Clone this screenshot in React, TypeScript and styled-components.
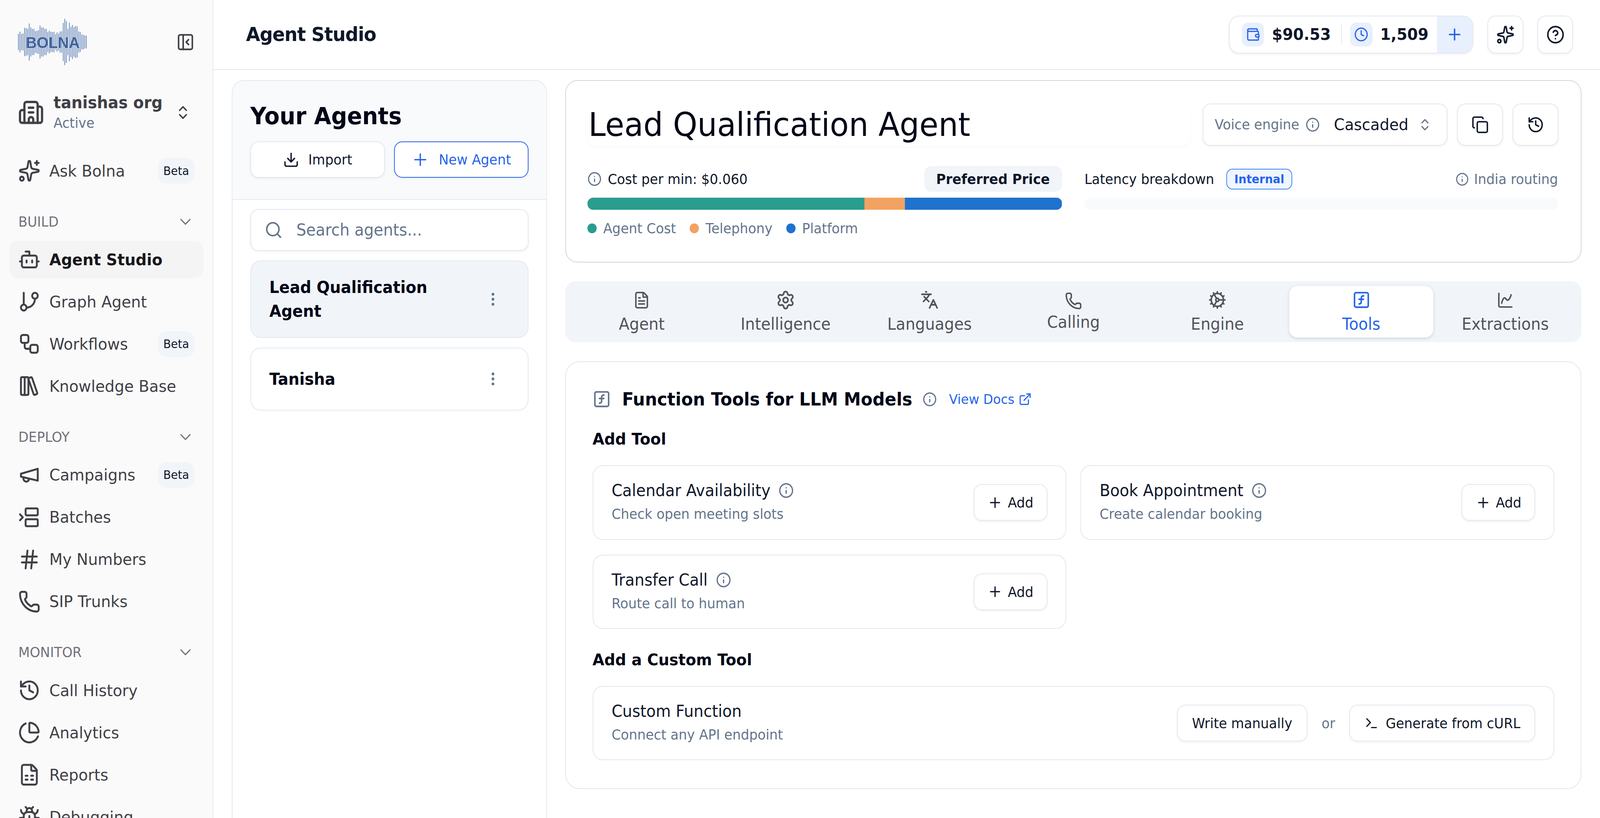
import React from 'react';
import styled, { createGlobalStyle } from 'styled-components';
import {
  BetweenHorizontalStart,
  Bot,
  Bug,
  Building2,
  ChartPie,
  ChartSpline,
  ChevronDown,
  ChevronsUpDown,
  CircleHelp,
  Clock,
  Cog,
  Copy,
  Download,
  EllipsisVertical,
  ExternalLink,
  FileSpreadsheet,
  FileText,
  GitBranch,
  Hash,
  History,
  Info,
  Languages,
  LibraryBig,
  PanelLeftClose,
  Phone,
  Plus,
  Search,
  Settings,
  Sparkles,
  SquareFunction,
  Terminal,
  Wallet,
  Workflow,
} from 'lucide-react';

const GlobalStyle = createGlobalStyle`
  html, body {
    margin: 0;
    padding: 0;
    background: #fff;
    overflow: hidden;
  }
  * {
    box-sizing: border-box;
  }
`;

// the design is a 1571px wide page shown at 2.75x, so 4320 real pixels
const DESIGN_WIDTH = 4320;

const Page = styled.div`
  zoom: 2.75;
  width: 1570.9px;
  height: 761.4px;
  display: flex;
  overflow: hidden;
  transform-origin: 0 0;
  background: #fff;
  color: #0f172a;
  font-family: 'DejaVu Sans', sans-serif;
`;

const Sidebar = styled.aside`
  flex: 0 0 209.5px;
  height: 100%;
  padding: 0 9px;
  display: flex;
  flex-direction: column;
  overflow: hidden;
  background: #fafafa;
  border-right: 1px solid #e2e8f0;
`;

const LogoRow = styled.div`
  flex: 0 0 78px;
  display: flex;
  align-items: center;
  justify-content: space-between;
  padding: 0 8.7px 0 8.4px;
  color: #3f3f46;
`;

const OrgRow = styled.div`
  flex: 0 0 52px;
  display: flex;
  align-items: center;
  gap: 9px;
  padding: 1.5px 12px 0 8.5px;
  color: #3f3f46;
`;

const OrgText = styled.div`
  flex: 1;
  margin-top: 1px;
  display: flex;
  flex-direction: column;
`;

const OrgName = styled.span`
  font-size: 15.25px;
  font-weight: 700;
  line-height: 19px;
  color: #3f3f46;
`;

const OrgStatus = styled.span`
  font-size: 13px;
  line-height: 19px;
  color: #64748b;
`;

const NavList = styled.div<{ $first?: boolean }>`
  display: flex;
  flex-direction: column;
  gap: 4.7px;
  margin-top: ${(p) => (p.$first ? '11.7px' : '8px')};
`;

const NavItem = styled.div<{ $active?: boolean }>`
  flex: 0 0 34.6px;
  display: flex;
  align-items: center;
  gap: 8.6px;
  padding: 0 8.8px;
  border-radius: 8px;
  font-size: 15.1px;
  font-weight: ${(p) => (p.$active ? 700 : 400)};
  color: ${(p) => (p.$active ? '#18181b' : '#3f3f46')};
  background: ${(p) => (p.$active ? '#f4f4f5' : 'transparent')};
  white-space: nowrap;

  svg {
    flex: none;
    color: #3f3f46;
  }
`;

const BetaBadge = styled.span`
  margin-left: auto;
  height: 24px;
  width: 36px;
  display: flex;
  align-items: center;
  justify-content: center;
  border-radius: 8px;
  background: #f1f5f9;
  color: #0f172a;
  font-size: 11px;
  font-weight: 400;
`;

const SectionLabel = styled.div`
  flex: 0 0 20px;
  margin-top: 20px;
  display: flex;
  align-items: center;
  justify-content: space-between;
  padding: 0 8.7px 0 9px;
  font-size: 13px;
  color: #71717a;
`;

const Main = styled.main`
  flex: 1;
  min-width: 0;
  display: flex;
  flex-direction: column;
`;

const TopBar = styled.header`
  flex: 0 0 65px;
  display: flex;
  align-items: center;
  justify-content: space-between;
  padding: 0 26.4px 0 32px;
  border-bottom: 1px solid #e2e8f0;
`;

const PageTitle = styled.h1`
  margin: 0;
  font-size: 18px;
  font-weight: 700;
  letter-spacing: -0.4px;
  color: #0f172a;
`;

const TopActions = styled.div`
  display: flex;
  align-items: center;
  gap: 14px;
`;

const CreditPill = styled.div`
  width: 240px;
  height: 35px;
  display: flex;
  align-items: stretch;
  overflow: hidden;
  border: 1px solid #e2e8f0;
  border-radius: 10px;
  background: #fff;
  box-shadow: 0 1px 2px rgba(0, 0, 0, 0.05);
`;

const CreditStats = styled.div`
  flex: 1;
  display: flex;
  align-items: center;
  padding-left: 12px;
`;

const CreditIcon = styled.span`
  width: 22px;
  height: 22px;
  display: flex;
  align-items: center;
  justify-content: center;
  border-radius: 6px;
  background: #e8effd;
  color: #2563eb;
`;

const CreditValue = styled.span`
  margin-left: 7.5px;
  font-size: 15px;
  font-weight: 700;
  color: #0f172a;
`;

const CreditDivider = styled.span`
  width: 1px;
  height: 18px;
  margin: 0 8px 0 10px;
  background: #e2e8f0;
`;

const CreditAdd = styled.div`
  flex: 0 0 35px;
  display: flex;
  align-items: center;
  justify-content: center;
  background: #e8effd;
  color: #2563eb;
`;

const IconButton = styled.div<{ $wide?: boolean }>`
  width: ${(p) => (p.$wide ? '45px' : '35px')};
  height: ${(p) => (p.$wide ? '39px' : '35px')};
  display: flex;
  align-items: center;
  justify-content: center;
  border: 1px solid #e2e8f0;
  border-radius: 8px;
  background: #fff;
  color: #0f172a;
  box-shadow: 0 1px 2px rgba(0, 0, 0, 0.05);
`;

const Content = styled.div`
  flex: 1;
  min-height: 0;
  display: flex;
  gap: 18px;
  padding: 9.4px 18px 0;
`;

const AgentsPanel = styled.section`
  flex: 0 0 309.5px;
  height: 760px;
  border: 1px solid #e2e8f0;
  border-radius: 12px;
  background: #fff;
`;

const AgentsHead = styled.div`
  height: 111px;
  padding: 17px 17.5px 0;
  background: #f8fafc;
  border-bottom: 1px solid #e2e8f0;
  border-radius: 12px 12px 0 0;
`;

const AgentsTitle = styled.h2`
  margin: 0 0 9.5px;
  height: 30px;
  line-height: 32px;
  font-size: 21.8px;
  font-weight: 700;
  color: #020617;
`;

const AgentsActions = styled.div`
  display: flex;
  gap: 9px;
`;

const Button = styled.div<{ $primary?: boolean }>`
  height: 34px;
  display: flex;
  align-items: center;
  justify-content: center;
  gap: 9px;
  padding: 0 14px;
  border: 1px solid ${(p) => (p.$primary ? '#2563eb' : '#e2e8f0')};
  border-radius: 8px;
  background: #fff;
  color: ${(p) => (p.$primary ? '#2563eb' : '#0f172a')};
  font-size: 13px;
  white-space: nowrap;
  box-shadow: 0 1px 2px rgba(0, 0, 0, 0.05);
`;

const PanelButton = styled(Button)`
  flex: 1;
`;

const AgentsBody = styled.div`
  padding: 8.5px 17.5px 0;
  display: flex;
  flex-direction: column;
  gap: 9px;
`;

const SearchBox = styled.div`
  height: 39px;
  display: flex;
  align-items: center;
  gap: 13.5px;
  padding: 0 13px;
  border: 1px solid #e2e8f0;
  border-radius: 8px;
  background: #fff;
  color: #64748b;
  font-size: 15.2px;
  box-shadow: 0 1px 2px rgba(0, 0, 0, 0.05);
`;

const AgentCard = styled.div<{ $selected?: boolean }>`
  min-height: 58.4px;
  display: flex;
  align-items: center;
  justify-content: space-between;
  padding: 13px 26px 13px 18px;
  border: 1px solid #e2e8f0;
  border-radius: 10px;
  background: ${(p) => (p.$selected ? '#f1f5f9' : '#fff')};
  color: #64748b;
`;

const AgentName = styled.span`
  width: 190px;
  font-size: 15.2px;
  font-weight: 700;
  line-height: 22.3px;
  color: #020617;
`;

const Workspace = styled.div`
  flex: 1;
  min-width: 0;
  display: flex;
  flex-direction: column;
`;

const AgentHero = styled.section`
  height: 170px;
  padding: 20.6px 22px 0 21px;
  border: 1px solid #d1d5db;
  border-radius: 12px;
  background: #fff;
`;

const HeroTop = styled.div`
  display: flex;
  align-items: center;
  gap: 13px;
`;

const TitleField = styled.div`
  flex: 1;
  height: 40.5px;
  display: flex;
  align-items: center;
  padding-left: 1px;
  border-radius: 8px;
  font-size: 30.5px;
  color: #020617;
  white-space: nowrap;
  box-shadow: 0 1px 2px rgba(0, 0, 0, 0.03);
`;

const HeroControls = styled.div`
  display: flex;
  gap: 9.5px;
`;

const EngineSelect = styled.div`
  width: 240.3px;
  height: 39px;
  display: flex;
  align-items: center;
  padding: 0 11px;
  border: 1px solid #e2e8f0;
  border-radius: 8px;
  background: #fff;
  box-shadow: 0 1px 2px rgba(0, 0, 0, 0.05);
`;

const EngineLabel = styled.span`
  display: flex;
  align-items: center;
  gap: 6px;
  font-size: 13px;
  color: #64748b;
`;

const EngineValue = styled.span`
  margin: 0 9px 0 14px;
  font-size: 15px;
  color: #0f172a;
`;

const HeroStats = styled.div`
  margin-top: 18.5px;
  display: grid;
  grid-template-columns: 466px 465px;
  column-gap: 22px;
`;

const StatHead = styled.div`
  height: 24px;
  display: flex;
  align-items: center;
  justify-content: space-between;
`;

const StatLabel = styled.span`
  display: flex;
  align-items: center;
  gap: 6px;
  font-size: 13px;
  color: #0f172a;

  svg {
    color: #64748b;
  }
`;

const PriceBadge = styled.span`
  height: 24px;
  display: flex;
  align-items: center;
  padding: 0 12px;
  border-radius: 7px;
  background: #f1f5f9;
  font-size: 13px;
  font-weight: 700;
  color: #0f172a;
`;

const InternalBadge = styled.span`
  height: 19.5px;
  display: flex;
  align-items: center;
  margin-left: 6px;
  padding: 0 7px;
  border: 1px solid #3b82f6;
  border-radius: 6px;
  background: #eff6ff;
  font-size: 11px;
  font-weight: 700;
  color: #2563eb;
`;

const RoutingNote = styled.span`
  display: flex;
  align-items: center;
  gap: 5px;
  font-size: 13px;
  color: #64748b;
`;

const CostBar = styled.div<{ $empty?: boolean }>`
  height: 11px;
  margin-top: 5.4px;
  display: flex;
  overflow: hidden;
  border-radius: 6px;
  background: ${(p) => (p.$empty ? '#f8fafc' : 'transparent')};
`;

const CostSegment = styled.span<{ $color: string; $share: number }>`
  width: ${(p) => p.$share}%;
  background: ${(p) => p.$color};
`;

const Legend = styled.div`
  margin-top: 10px;
  display: flex;
  gap: 13.5px;
`;

const LegendItem = styled.span`
  display: flex;
  align-items: center;
  gap: 6.5px;
  line-height: 15px;
  font-size: 13px;
  color: #64748b;
`;

const LegendDot = styled.i<{ $color: string }>`
  width: 9px;
  height: 9px;
  border-radius: 50%;
  background: ${(p) => p.$color};
`;

const TabStrip = styled.nav`
  height: 56.6px;
  margin-top: 17.5px;
  display: flex;
  padding: 4.4px;
  border-radius: 10px;
  background: #f1f5f9;
`;

const Tab = styled.div<{ $active?: boolean; $compact?: boolean }>`
  flex: 1 1 0;
  display: flex;
  flex-direction: column;
  align-items: center;
  padding-top: ${(p) => (p.$compact ? '5.5px' : '4.5px')};
  gap: ${(p) => (p.$compact ? '1px' : '4px')};
  border-radius: 8px;
  font-size: 15.2px;
  line-height: 20px;
  color: ${(p) => (p.$active ? '#2563eb' : '#52525b')};
  background: ${(p) => (p.$active ? '#fff' : 'transparent')};
  box-shadow: ${(p) => (p.$active ? '0 1px 3px rgba(0, 0, 0, 0.12)' : 'none')};
`;

const TabIcon = styled.span`
  flex: none;
  height: 17px;
  display: flex;
  align-items: center;
  justify-content: center;

  svg {
    flex: none;
  }
`;

const ToolsCard = styled.section`
  margin-top: 18px;
  padding: 26px;
  border: 1px solid #e2e8f0;
  border-radius: 14px;
  background: #fff;
`;

const ToolsHeading = styled.div`
  height: 17px;
  display: flex;
  align-items: center;
  color: #64748b;
`;

const ToolsTitle = styled.h3`
  margin: 0 10px 0 11px;
  font-size: 16.75px;
  font-weight: 700;
  color: #020617;
`;

const DocsLink = styled.a`
  display: flex;
  align-items: center;
  gap: 4px;
  margin-left: 12px;
  font-size: 12.5px;
  color: #2563eb;
`;

const SubHeading = styled.h4`
  height: 22px;
  margin: 17.5px 0 13.3px;
  line-height: 22px;
  font-size: 15px;
  font-weight: 700;
  color: #020617;
`;

const ToolGrid = styled.div`
  display: grid;
  grid-template-columns: 1fr 1fr;
  gap: 13.8px;
`;

const ToolCard = styled.div`
  height: 69.4px;
  display: flex;
  align-items: center;
  justify-content: space-between;
  padding: 0 18px;
  border: 1px solid #e2e8f0;
  border-radius: 10px;
  background: #fff;
`;

const ToolText = styled.div`
  display: flex;
  flex-direction: column;
  gap: 3px;
`;

const ToolName = styled.span`
  display: flex;
  align-items: center;
  gap: 8px;
  line-height: 19px;
  font-size: 15.2px;
  color: #0f172a;

  svg {
    color: #64748b;
  }
`;

const ToolHint = styled.span`
  line-height: 19px;
  font-size: 13px;
  color: #64748b;
`;

const AddButton = styled(Button)`
  width: 72.5px;
  gap: 5px;
  padding: 0;
`;

const CustomActions = styled.div`
  display: flex;
  align-items: center;
  gap: 14px;
  color: #64748b;
  font-size: 13px;
`;

const GenerateButton = styled(Button)`
  gap: 7px;
`;

const LOGO_BARS = [
  62, 79, 62, 66, 109, 106, 101, 142, 112, 101, 101, 83, 87, 91, 127, 111, 112, 101, 101, 77, 87, 79, 77,
  79, 59, 73, 65, 81, 82, 147, 178, 161, 101, 148, 116, 131, 114, 123, 120, 81, 77, 57, 57, 50, 50,
];

const Logo = () => (
  <svg width="69" height="44" viewBox="0 0 189 121" aria-label="Bolna">
    {LOGO_BARS.map((h, i) => (
      <rect key={i} x={i * 4.17 + 0.4} y={60.5 - h / 3} width="1.9" height={(h * 2) / 3} fill="#5d7fb5" />
    ))}
    <text
      x="94"
      y="76"
      textAnchor="middle"
      fontFamily="Liberation Sans, sans-serif"
      fontWeight="700"
      fontSize="41"
      fill="#3f6199"
      stroke="#fafafa"
      strokeWidth="0.8"
      paintOrder="stroke"
    >
      BOLNA
    </text>
  </svg>
);

// older lucide megaphone, the one in the package changed its outline
const MegaphoneIcon = ({ size }: { size: number }) => (
  <svg
    width={size}
    height={size}
    viewBox="0 0 24 24"
    fill="none"
    stroke="currentColor"
    strokeWidth="2"
    strokeLinecap="round"
    strokeLinejoin="round"
  >
    <path d="m3 11 18-5v12L3 14v-3z" />
    <path d="M11.6 16.8a3 3 0 1 1-5.8-1.6" />
  </svg>
);

const ICON = 22;

const NAV_SECTIONS = [
  {
    label: 'BUILD',
    items: [
      { label: 'Agent Studio', icon: <Bot size={ICON} />, active: true },
      { label: 'Graph Agent', icon: <GitBranch size={ICON} /> },
      { label: 'Workflows', icon: <Workflow size={ICON} />, beta: true },
      { label: 'Knowledge Base', icon: <LibraryBig size={ICON} /> },
    ],
  },
  {
    label: 'DEPLOY',
    items: [
      { label: 'Campaigns', icon: <MegaphoneIcon size={ICON} />, beta: true },
      { label: 'Batches', icon: <BetweenHorizontalStart size={ICON} /> },
      { label: 'My Numbers', icon: <Hash size={ICON} /> },
      { label: 'SIP Trunks', icon: <Phone size={ICON} /> },
    ],
  },
  {
    label: 'MONITOR',
    items: [
      { label: 'Call History', icon: <History size={ICON} /> },
      { label: 'Analytics', icon: <ChartPie size={ICON} /> },
      { label: 'Reports', icon: <FileSpreadsheet size={ICON} /> },
      { label: 'Debugging', icon: <Bug size={ICON} /> },
    ],
  },
];

const TABS = [
  { label: 'Agent', icon: <FileText size={17} /> },
  { label: 'Intelligence', icon: <Settings size={19} /> },
  { label: 'Languages', icon: <Languages size={18} /> },
  { label: 'Calling', icon: <Phone size={17} />, compact: true },
  { label: 'Engine', icon: <Cog size={18} /> },
  { label: 'Tools', icon: <SquareFunction size={18} />, active: true },
  { label: 'Extractions', icon: <ChartSpline size={17} /> },
];

const TOOLS = [
  { name: 'Calendar Availability', hint: 'Check open meeting slots' },
  { name: 'Book Appointment', hint: 'Create calendar booking' },
  { name: 'Transfer Call', hint: 'Route call to human' },
];

const COSTS = [
  { label: 'Agent Cost', color: '#2a9d8f', share: 58.4 },
  { label: 'Telephony', color: '#f4a261', share: 8.5 },
  { label: 'Platform', color: '#1f72cd', share: 33.1 },
];

export default function App() {
  // the browser can hand us a window narrower than the design, keep all of it in view
  const fit = Math.min(1, window.innerWidth / DESIGN_WIDTH);

  return (
    <Page style={{ transform: `scaleX(${fit})` }}>
      <GlobalStyle />
      <Sidebar>
        <LogoRow>
          <Logo />
          <PanelLeftClose size={18} />
        </LogoRow>
        <OrgRow>
          <Building2 size={26} />
          <OrgText>
            <OrgName>tanishas org</OrgName>
            <OrgStatus>Active</OrgStatus>
          </OrgText>
          <ChevronsUpDown size={16} />
        </OrgRow>
        <NavList $first>
          <NavItem>
            <Sparkles size={ICON} />
            Ask Bolna
            <BetaBadge>Beta</BetaBadge>
          </NavItem>
        </NavList>
        {NAV_SECTIONS.map((section) => (
          <React.Fragment key={section.label}>
            <SectionLabel>
              {section.label}
              <ChevronDown size={18} strokeWidth={1.5} />
            </SectionLabel>
            <NavList>
              {section.items.map((item) => (
                <NavItem key={item.label} $active={item.active}>
                  {item.icon}
                  {item.label}
                  {item.beta && <BetaBadge>Beta</BetaBadge>}
                </NavItem>
              ))}
            </NavList>
          </React.Fragment>
        ))}
      </Sidebar>

      <Main>
        <TopBar>
          <PageTitle>Agent Studio</PageTitle>
          <TopActions>
            <CreditPill>
              <CreditStats>
                <CreditIcon>
                  <Wallet size={14} />
                </CreditIcon>
                <CreditValue>$90.53</CreditValue>
                <CreditDivider />
                <CreditIcon>
                  <Clock size={14} />
                </CreditIcon>
                <CreditValue>1,509</CreditValue>
              </CreditStats>
              <CreditAdd>
                <Plus size={17} />
              </CreditAdd>
            </CreditPill>
            <IconButton>
              <Sparkles size={18} />
            </IconButton>
            <IconButton>
              <CircleHelp size={18} />
            </IconButton>
          </TopActions>
        </TopBar>

        <Content>
          <AgentsPanel>
            <AgentsHead>
              <AgentsTitle>Your Agents</AgentsTitle>
              <AgentsActions>
                <PanelButton>
                  <Download size={16} />
                  Import
                </PanelButton>
                <PanelButton $primary>
                  <Plus size={18} strokeWidth={1.75} />
                  New Agent
                </PanelButton>
              </AgentsActions>
            </AgentsHead>
            <AgentsBody>
              <SearchBox>
                <Search size={18} />
                Search agents...
              </SearchBox>
              <AgentCard $selected>
                <AgentName>Lead Qualification Agent</AgentName>
                <EllipsisVertical size={16} />
              </AgentCard>
              <AgentCard>
                <AgentName>Tanisha</AgentName>
                <EllipsisVertical size={16} />
              </AgentCard>
            </AgentsBody>
          </AgentsPanel>

          <Workspace>
            <AgentHero>
              <HeroTop>
                <TitleField>Lead Qualification Agent</TitleField>
                <HeroControls>
                  <EngineSelect>
                    <EngineLabel>
                      Voice engine
                      <Info size={14} />
                    </EngineLabel>
                    <EngineValue>Cascaded</EngineValue>
                    <ChevronsUpDown size={14} color="#64748b" />
                  </EngineSelect>
                  <IconButton $wide>
                    <Copy size={17} />
                  </IconButton>
                  <IconButton $wide>
                    <History size={17} />
                  </IconButton>
                </HeroControls>
              </HeroTop>
              <HeroStats>
                <div>
                  <StatHead>
                    <StatLabel>
                      <Info size={14} />
                      Cost per min: $0.060
                    </StatLabel>
                    <PriceBadge>Preferred Price</PriceBadge>
                  </StatHead>
                  <CostBar>
                    {COSTS.map((c) => (
                      <CostSegment key={c.label} $color={c.color} $share={c.share} />
                    ))}
                  </CostBar>
                  <Legend>
                    {COSTS.map((c) => (
                      <LegendItem key={c.label}>
                        <LegendDot $color={c.color} />
                        {c.label}
                      </LegendItem>
                    ))}
                  </Legend>
                </div>
                <div>
                  <StatHead>
                    <StatLabel>
                      Latency breakdown
                      <InternalBadge>Internal</InternalBadge>
                    </StatLabel>
                    <RoutingNote>
                      <Info size={13} />
                      India routing
                    </RoutingNote>
                  </StatHead>
                  <CostBar $empty />
                </div>
              </HeroStats>
            </AgentHero>

            <TabStrip>
              {TABS.map((tab) => (
                <Tab key={tab.label} $active={tab.active} $compact={tab.compact}>
                  <TabIcon>{tab.icon}</TabIcon>
                  {tab.label}
                </Tab>
              ))}
            </TabStrip>

            <ToolsCard>
              <ToolsHeading>
                <SquareFunction size={18} />
                <ToolsTitle>Function Tools for LLM Models</ToolsTitle>
                <Info size={14} />
                <DocsLink>
                  View Docs
                  <ExternalLink size={13} />
                </DocsLink>
              </ToolsHeading>
              <SubHeading>Add Tool</SubHeading>
              <ToolGrid>
                {TOOLS.map((tool) => (
                  <ToolCard key={tool.name}>
                    <ToolText>
                      <ToolName>
                        {tool.name}
                        <Info size={15} />
                      </ToolName>
                      <ToolHint>{tool.hint}</ToolHint>
                    </ToolText>
                    <AddButton>
                      <Plus size={15} />
                      Add
                    </AddButton>
                  </ToolCard>
                ))}
              </ToolGrid>
              <SubHeading>Add a Custom Tool</SubHeading>
              <ToolCard>
                <ToolText>
                  <ToolName>Custom Function</ToolName>
                  <ToolHint>Connect any API endpoint</ToolHint>
                </ToolText>
                <CustomActions>
                  <Button>Write manually</Button>
                  or
                  <GenerateButton>
                    <Terminal size={14} />
                    Generate from cURL
                  </GenerateButton>
                </CustomActions>
              </ToolCard>
            </ToolsCard>
          </Workspace>
        </Content>
      </Main>
    </Page>
  );
}
